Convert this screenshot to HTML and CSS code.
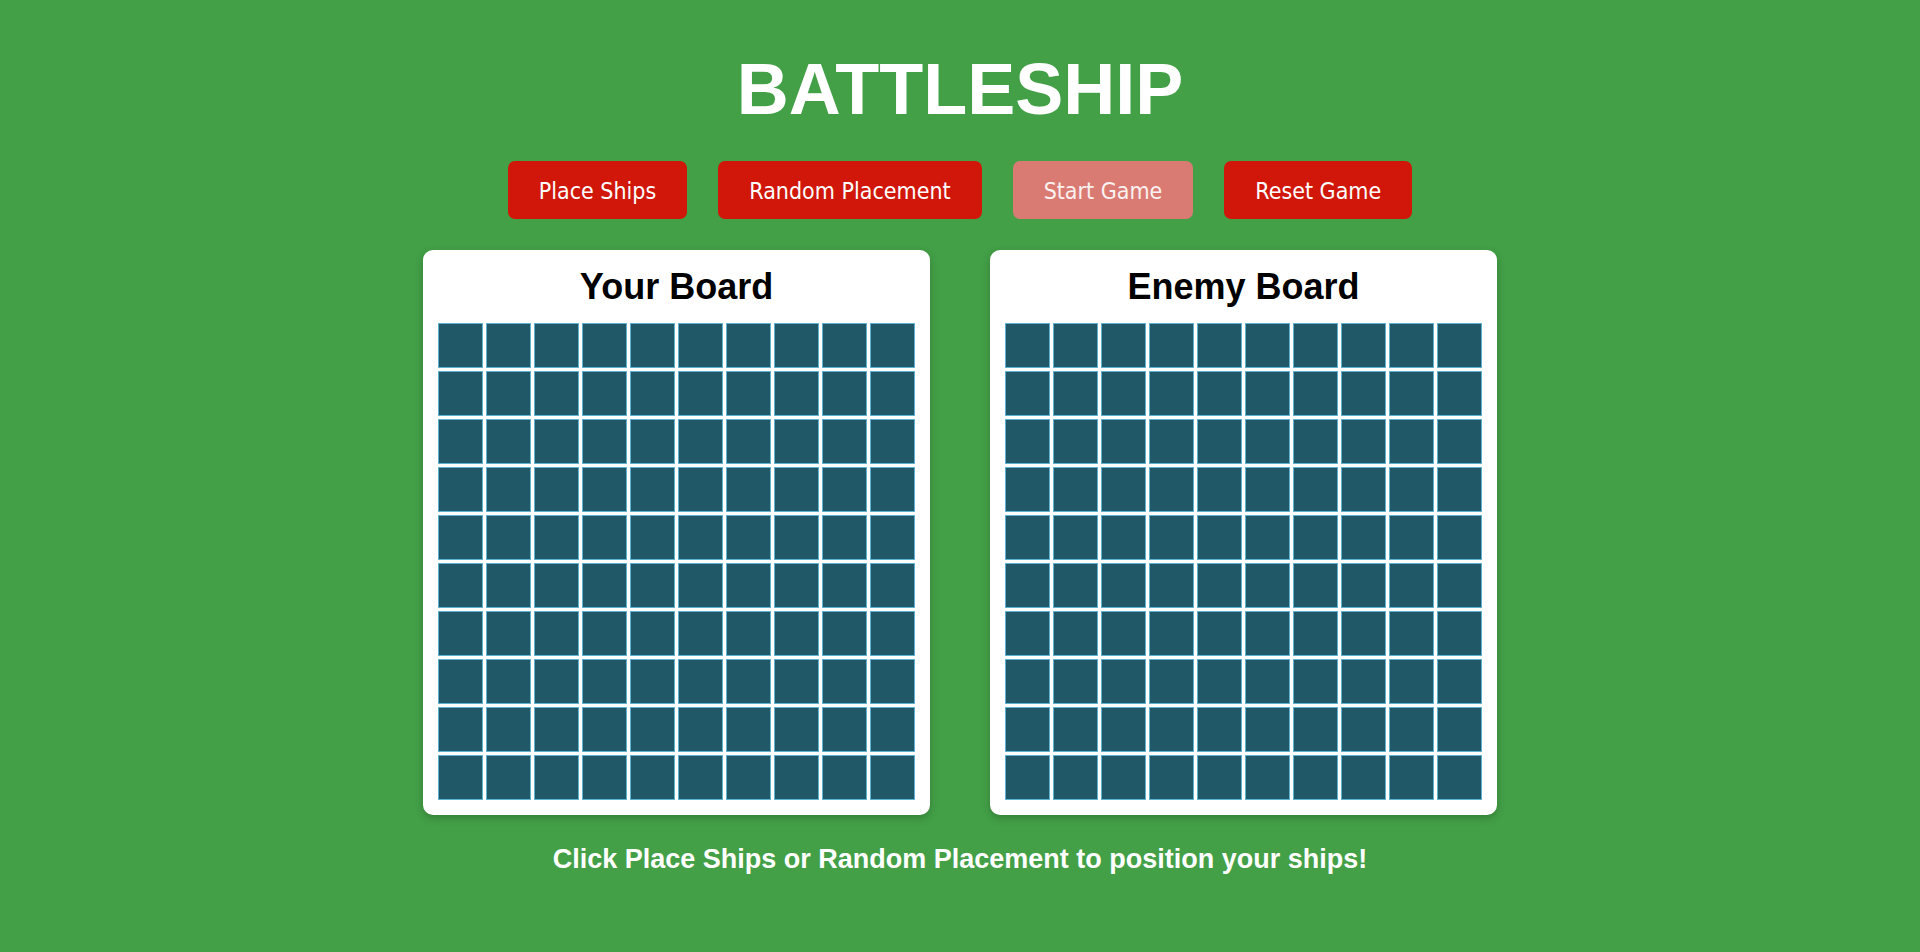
FILE: index.html
```html
<!DOCTYPE html>
<html lang="en">
<head>
<meta charset="utf-8">
<title>Battleship</title>
<link rel="stylesheet" href="styles.css">
</head>
<body>
<div class="page">
  <h1 class="title">BATTLESHIP</h1>
  <div class="controls">
    <button class="btn">Place Ships</button>
    <button class="btn">Random Placement</button>
    <button class="btn btn-disabled" disabled>Start Game</button>
    <button class="btn">Reset Game</button>
  </div>
  <div class="boards">
    <section class="card">
      <h2 class="card-title">Your Board</h2>
      <div class="grid">
        <div class="cell"></div><div class="cell"></div><div class="cell"></div><div class="cell"></div><div class="cell"></div><div class="cell"></div><div class="cell"></div><div class="cell"></div><div class="cell"></div><div class="cell"></div>
        <div class="cell"></div><div class="cell"></div><div class="cell"></div><div class="cell"></div><div class="cell"></div><div class="cell"></div><div class="cell"></div><div class="cell"></div><div class="cell"></div><div class="cell"></div>
        <div class="cell"></div><div class="cell"></div><div class="cell"></div><div class="cell"></div><div class="cell"></div><div class="cell"></div><div class="cell"></div><div class="cell"></div><div class="cell"></div><div class="cell"></div>
        <div class="cell"></div><div class="cell"></div><div class="cell"></div><div class="cell"></div><div class="cell"></div><div class="cell"></div><div class="cell"></div><div class="cell"></div><div class="cell"></div><div class="cell"></div>
        <div class="cell"></div><div class="cell"></div><div class="cell"></div><div class="cell"></div><div class="cell"></div><div class="cell"></div><div class="cell"></div><div class="cell"></div><div class="cell"></div><div class="cell"></div>
        <div class="cell"></div><div class="cell"></div><div class="cell"></div><div class="cell"></div><div class="cell"></div><div class="cell"></div><div class="cell"></div><div class="cell"></div><div class="cell"></div><div class="cell"></div>
        <div class="cell"></div><div class="cell"></div><div class="cell"></div><div class="cell"></div><div class="cell"></div><div class="cell"></div><div class="cell"></div><div class="cell"></div><div class="cell"></div><div class="cell"></div>
        <div class="cell"></div><div class="cell"></div><div class="cell"></div><div class="cell"></div><div class="cell"></div><div class="cell"></div><div class="cell"></div><div class="cell"></div><div class="cell"></div><div class="cell"></div>
        <div class="cell"></div><div class="cell"></div><div class="cell"></div><div class="cell"></div><div class="cell"></div><div class="cell"></div><div class="cell"></div><div class="cell"></div><div class="cell"></div><div class="cell"></div>
        <div class="cell"></div><div class="cell"></div><div class="cell"></div><div class="cell"></div><div class="cell"></div><div class="cell"></div><div class="cell"></div><div class="cell"></div><div class="cell"></div><div class="cell"></div>
      </div>
    </section>
    <section class="card">
      <h2 class="card-title">Enemy Board</h2>
      <div class="grid">
        <div class="cell"></div><div class="cell"></div><div class="cell"></div><div class="cell"></div><div class="cell"></div><div class="cell"></div><div class="cell"></div><div class="cell"></div><div class="cell"></div><div class="cell"></div>
        <div class="cell"></div><div class="cell"></div><div class="cell"></div><div class="cell"></div><div class="cell"></div><div class="cell"></div><div class="cell"></div><div class="cell"></div><div class="cell"></div><div class="cell"></div>
        <div class="cell"></div><div class="cell"></div><div class="cell"></div><div class="cell"></div><div class="cell"></div><div class="cell"></div><div class="cell"></div><div class="cell"></div><div class="cell"></div><div class="cell"></div>
        <div class="cell"></div><div class="cell"></div><div class="cell"></div><div class="cell"></div><div class="cell"></div><div class="cell"></div><div class="cell"></div><div class="cell"></div><div class="cell"></div><div class="cell"></div>
        <div class="cell"></div><div class="cell"></div><div class="cell"></div><div class="cell"></div><div class="cell"></div><div class="cell"></div><div class="cell"></div><div class="cell"></div><div class="cell"></div><div class="cell"></div>
        <div class="cell"></div><div class="cell"></div><div class="cell"></div><div class="cell"></div><div class="cell"></div><div class="cell"></div><div class="cell"></div><div class="cell"></div><div class="cell"></div><div class="cell"></div>
        <div class="cell"></div><div class="cell"></div><div class="cell"></div><div class="cell"></div><div class="cell"></div><div class="cell"></div><div class="cell"></div><div class="cell"></div><div class="cell"></div><div class="cell"></div>
        <div class="cell"></div><div class="cell"></div><div class="cell"></div><div class="cell"></div><div class="cell"></div><div class="cell"></div><div class="cell"></div><div class="cell"></div><div class="cell"></div><div class="cell"></div>
        <div class="cell"></div><div class="cell"></div><div class="cell"></div><div class="cell"></div><div class="cell"></div><div class="cell"></div><div class="cell"></div><div class="cell"></div><div class="cell"></div><div class="cell"></div>
        <div class="cell"></div><div class="cell"></div><div class="cell"></div><div class="cell"></div><div class="cell"></div><div class="cell"></div><div class="cell"></div><div class="cell"></div><div class="cell"></div><div class="cell"></div>
      </div>
    </section>
  </div>
  <p class="message">Click Place Ships or Random Placement to position your ships!</p>
</div>
</body>
</html>
```
FILE: styles.css
```css
html, body {
  margin: 0;
  padding: 0;
  background: #43a047;
  min-height: 100%;
}

body {
  font-family: "Liberation Sans", Arial, sans-serif;
}

.page {
  display: flex;
  flex-direction: column;
  align-items: center;
  padding-top: 49px;
}

.title {
  margin: 0;
  font-size: 72px;
  line-height: 80px;
  font-weight: bold;
  color: #ffffff;
}

.controls {
  display: flex;
  gap: 31px;
  margin-top: 32px;
}

.btn {
  font-family: "DejaVu Sans Condensed", "DejaVu Sans", sans-serif;
  font-stretch: condensed;
  font-size: 23px;
  line-height: 28px;
  padding: 16px 31px 14px;
  border: none;
  border-radius: 7px;
  background: #d0170a;
  color: #ffffff;
  cursor: pointer;
}

.btn-disabled {
  background: #d97b73;
  color: #fbf1f0;
  cursor: default;
}

.boards {
  display: flex;
  gap: 60px;
  margin-top: 31px;
}

.card {
  background: #ffffff;
  border-radius: 10px;
  padding: 15px;
  box-shadow: 0 3px 8px rgba(0, 0, 0, 0.22);
}

.card-title {
  margin: 2px 0 16px;
  font-size: 36px;
  line-height: 40px;
  font-weight: bold;
  text-align: center;
  color: #000000;
}

.grid {
  display: grid;
  grid-template-columns: repeat(10, 45px);
  grid-auto-rows: 45px;
  gap: 3px;
}

.cell {
  box-sizing: border-box;
  background: #205868;
  border: 1px solid #5cb2cf;
}

.message {
  margin: 29px 0 0;
  font-size: 27px;
  font-weight: bold;
  color: #ffffff;
}
```
